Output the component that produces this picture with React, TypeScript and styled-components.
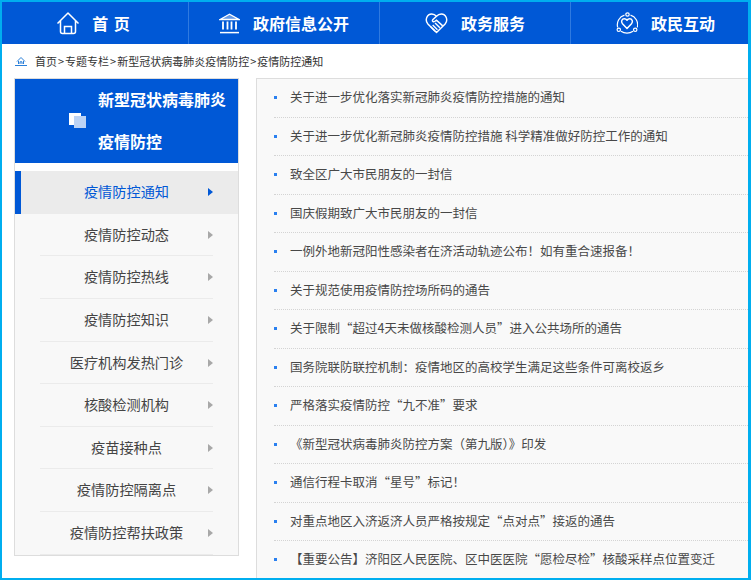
import React from 'react';
import styled, { createGlobalStyle } from 'styled-components';

const GlobalStyle = createGlobalStyle`
  html, body {
    margin: 0;
    padding: 0;
    background: #fff;
  }
  * {
    box-sizing: border-box;
  }
`;

const BLUE = '#0058d6';

const Frame = styled.div`
  width: 751px;
  height: 580px;
  overflow: hidden;
  background: #fff;
  border-style: solid;
  border-color: #00aeef;
  border-width: 2px 3px 2px 2px;
  font-family: "Noto Sans CJK SC", "Noto Sans", sans-serif;
`;

const NavBar = styled.nav`
  display: grid;
  grid-template-columns: 187px 191px 191px 1fr;
  height: 42px;
  background: ${BLUE};
`;

const NavItem = styled.a<{ $gap: number; $left?: number; $right?: number }>`
  display: flex;
  align-items: center;
  justify-content: center;
  gap: ${p => p.$gap}px;
  padding-left: ${p => p.$left || 0}px;
  padding-right: ${p => p.$right || 0}px;
  color: #fff;
  font-size: 16px;
  font-weight: 700;
  border-right: 1px solid #2f7ae0;
  &:last-child {
    border-right: none;
  }
`;

const HomeLabel = styled.span`
  word-spacing: 2px;
`;

const NavIcon = styled.svg`
  flex: none;
  display: block;
  fill: none;
  stroke: #fff;
`;

const Crumbs = styled.div`
  display: flex;
  align-items: center;
  height: 34px;
  padding: 0 0 0 13px;
  font-size: 11px;
  color: #333;
`;

const CrumbSep = styled.span`
  margin: 0 1px;
`;

const CrumbIcon = styled.svg`
  display: block;
  margin-right: 8px;
  fill: none;
  stroke: #2a7fd8;
`;

const Content = styled.div`
  display: flex;
  align-items: flex-start;
  padding-left: 12px;
`;

const Side = styled.aside`
  flex: none;
  width: 225px;
  height: 478px;
  overflow: hidden;
  border: 1px solid #ddd;
  background: #f8f8f8;
`;

const SideHead = styled.div`
  display: flex;
  align-items: center;
  height: 84px;
  padding-left: 54px;
  background: ${BLUE};
  box-shadow: 0 8px 0 #fff;
  margin-bottom: 8px;
`;

const Squares = styled.span`
  position: relative;
  flex: none;
  width: 12px;
  height: 12px;
  margin-right: 17px;
  margin-top: -4px;
  background: #fff;
  z-index: 1;
  &::after {
    content: '';
    position: absolute;
    left: 5px;
    top: 3px;
    width: 12px;
    height: 12px;
    background: #bcd3f5;
    z-index: -1;
  }
`;

const SideTitle = styled.h2`
  width: 130px;
  margin: -2px 0 0;
  color: #fff;
  font-size: 16px;
  font-weight: 700;
  line-height: 42px;
`;

const SideList = styled.ul`
  margin: 0;
  padding: 0;
  list-style: none;
`;

const SideItem = styled.li<{ $active?: boolean }>`
  position: relative;
  height: 42.65px;
  line-height: 41px;
  text-align: center;
  font-size: 14.2px;
  color: ${p => (p.$active ? '#0058d6' : '#444')};
  background: ${p => (p.$active ? '#ebebeb' : 'transparent')};
  border-left: ${p => (p.$active ? `6px solid ${BLUE}` : 'none')};
  padding-right: ${p => (p.$active ? '6px' : '0')};

  /* row rule, inset from the sides */
  &::before {
    content: ${p => (p.$active ? 'none' : "''")};
    position: absolute;
    left: 25px;
    right: 25px;
    bottom: 0;
    height: 1px;
    background: #ebebeb;
  }

  /* arrow */
  &::after {
    content: '';
    position: absolute;
    right: 25px;
    top: 17px;
    border-style: solid;
    border-width: 4px 0 4px 5px;
    border-color: transparent transparent transparent ${p => (p.$active ? BLUE : '#a8a8a8')};
  }
`;

const Panel = styled.main`
  flex: 1;
  margin-left: 17px;
  min-height: 520px;
  padding-left: 17px;
  background: #f9f9f9;
  border-left: 1px solid #ddd;
  border-top: 1px solid #ddd;
`;

const NewsList = styled.ul`
  margin: 0;
  padding: 0;
  list-style: none;
`;

const NewsItem = styled.li`
  position: relative;
  height: 38.5px;
  line-height: 36px;
  padding-left: 16px;
  font-size: 12.5px;
  color: #484848;
  white-space: nowrap;
  border-bottom: 1px dotted #d4d4d4;

  &::before {
    content: '';
    position: absolute;
    left: 0;
    top: 17px;
    width: 3px;
    height: 3px;
    background: #2a80f0;
  }
`;

const crumbs = ['首页', '专题专栏', '新型冠状病毒肺炎疫情防控', '疫情防控通知'];

const menu = [
  '疫情防控通知',
  '疫情防控动态',
  '疫情防控热线',
  '疫情防控知识',
  '医疗机构发热门诊',
  '核酸检测机构',
  '疫苗接种点',
  '疫情防控隔离点',
  '疫情防控帮扶政策',
];

const news = [
  '关于进一步优化落实新冠肺炎疫情防控措施的通知',
  '关于进一步优化新冠肺炎疫情防控措施 科学精准做好防控工作的通知',
  '致全区广大市民朋友的一封信',
  '国庆假期致广大市民朋友的一封信',
  '一例外地新冠阳性感染者在济活动轨迹公布！如有重合速报备！',
  '关于规范使用疫情防控场所码的通告',
  '关于限制“超过4天未做核酸检测人员”进入公共场所的通告',
  '国务院联防联控机制：疫情地区的高校学生满足这些条件可离校返乡',
  '严格落实疫情防控“九不准”要求',
  '《新型冠状病毒肺炎防控方案（第九版）》印发',
  '通信行程卡取消“星号”标记！',
  '对重点地区入济返济人员严格按规定“点对点”接返的通告',
  '【重要公告】济阳区人民医院、区中医医院“愿检尽检”核酸采样点位置变迁',
];

const App: React.FC = () => (
  <Frame>
    <GlobalStyle />
    <NavBar>
      <NavItem $gap={12} $right={4}>
        <NavIcon width="24" height="24" viewBox="0 0 24 24" strokeWidth="1.5">
          <path d="M1.5 12.5 12 2l10.5 10.5M4.500 10v10.500a2 2 0 0 0 2 2h11a2 2 0 0 0 2-2V10" strokeLinejoin="round" />
          <path d="M8.500 22.500v-7h7v7" />
        </NavIcon>
        <HomeLabel>首 页</HomeLabel>
      </NavItem>
      <NavItem $gap={13}>
        <NavIcon width="21" height="21" viewBox="0 0 21 21" strokeWidth="1.3">
          <path d="M1 6.500 10.500 1.200 20 6.500Z" fill="#fff" fillOpacity="0.4" />
          <path d="M4 8.500v8M8.500 8.500v8M12.500 8.500v8M17 8.500v8" strokeWidth="1.800" />
          <path d="M1 19.600h19" strokeWidth="1.500" />
        </NavIcon>
        <span>政府信息公开</span>
      </NavItem>
      <NavItem $gap={13}>
        <NavIcon width="23" height="22" viewBox="0 0 24 23" strokeWidth="1.5">
          <path d="M12 21.500 3 12.500C-.5 8.500 2 2 7 2c2 0 3.600.8 5 2.400C13.400 2.800 15 2 17 2c5 0 7.500 6.500 4 10.500Z" strokeLinejoin="round" />
          <path d="M12 4.400 8 8.200c-1 1.200.8 2.600 2 1.700l2-1.400 6.500 6M8 13.500l5 5M6 15.500l4.500 4.500M10.500 11.500l5 5" />
        </NavIcon>
        <span>政务服务</span>
      </NavItem>
      <NavItem $gap={13} $left={12}>
        <NavIcon width="22" height="23" viewBox="0 0 22 23" strokeWidth="1.2">
          <path d="M11 16.500 6.500 11.800C4.500 9.500 6 6.800 8.300 6.800c1.100 0 2 .5 2.700 1.500.7-1 1.600-1.500 2.700-1.500 2.300 0 3.800 2.700 1.800 5Z" strokeWidth="1.500" strokeLinejoin="round" />
          <circle cx="11.500" cy="2.500" r="1.700" />
          <circle cx="2.800" cy="17.800" r="1.700" />
          <circle cx="19.200" cy="17.800" r="1.700" />
          <path d="M8.500 3.200C3.500 4.500.2 10 1.700 15.400M14.500 3.200c5 1.300 8.300 6.800 6.800 12.200M5 19.300c3.500 2.500 8.500 2.500 12 0" />
        </NavIcon>
        <span>政民互动</span>
      </NavItem>
    </NavBar>

    <Crumbs>
      <CrumbIcon width="12" height="10" viewBox="0 0 12 10" strokeWidth="1">
        <path d="M2 5.500 6 1.500l4 4M3.500 5v3M8.500 5v3M5 8V5.800h2V8" />
        <path d="M0 9.500h12" />
      </CrumbIcon>
      {crumbs.map((c, i) => (
        <React.Fragment key={c}>
          {i > 0 && <CrumbSep>&gt;</CrumbSep>}
          <span>{c}</span>
        </React.Fragment>
      ))}
    </Crumbs>

    <Content>
      <Side>
        <SideHead>
          <Squares />
          <SideTitle>新型冠状病毒肺炎疫情防控</SideTitle>
        </SideHead>
        <SideList>
          {menu.map((label, i) => (
            <SideItem key={label} $active={i === 0}>{label}</SideItem>
          ))}
        </SideList>
      </Side>
      <Panel>
        <NewsList>
          {news.map(title => (
            <NewsItem key={title}>{title}</NewsItem>
          ))}
        </NewsList>
      </Panel>
    </Content>
  </Frame>
);

export default App;
